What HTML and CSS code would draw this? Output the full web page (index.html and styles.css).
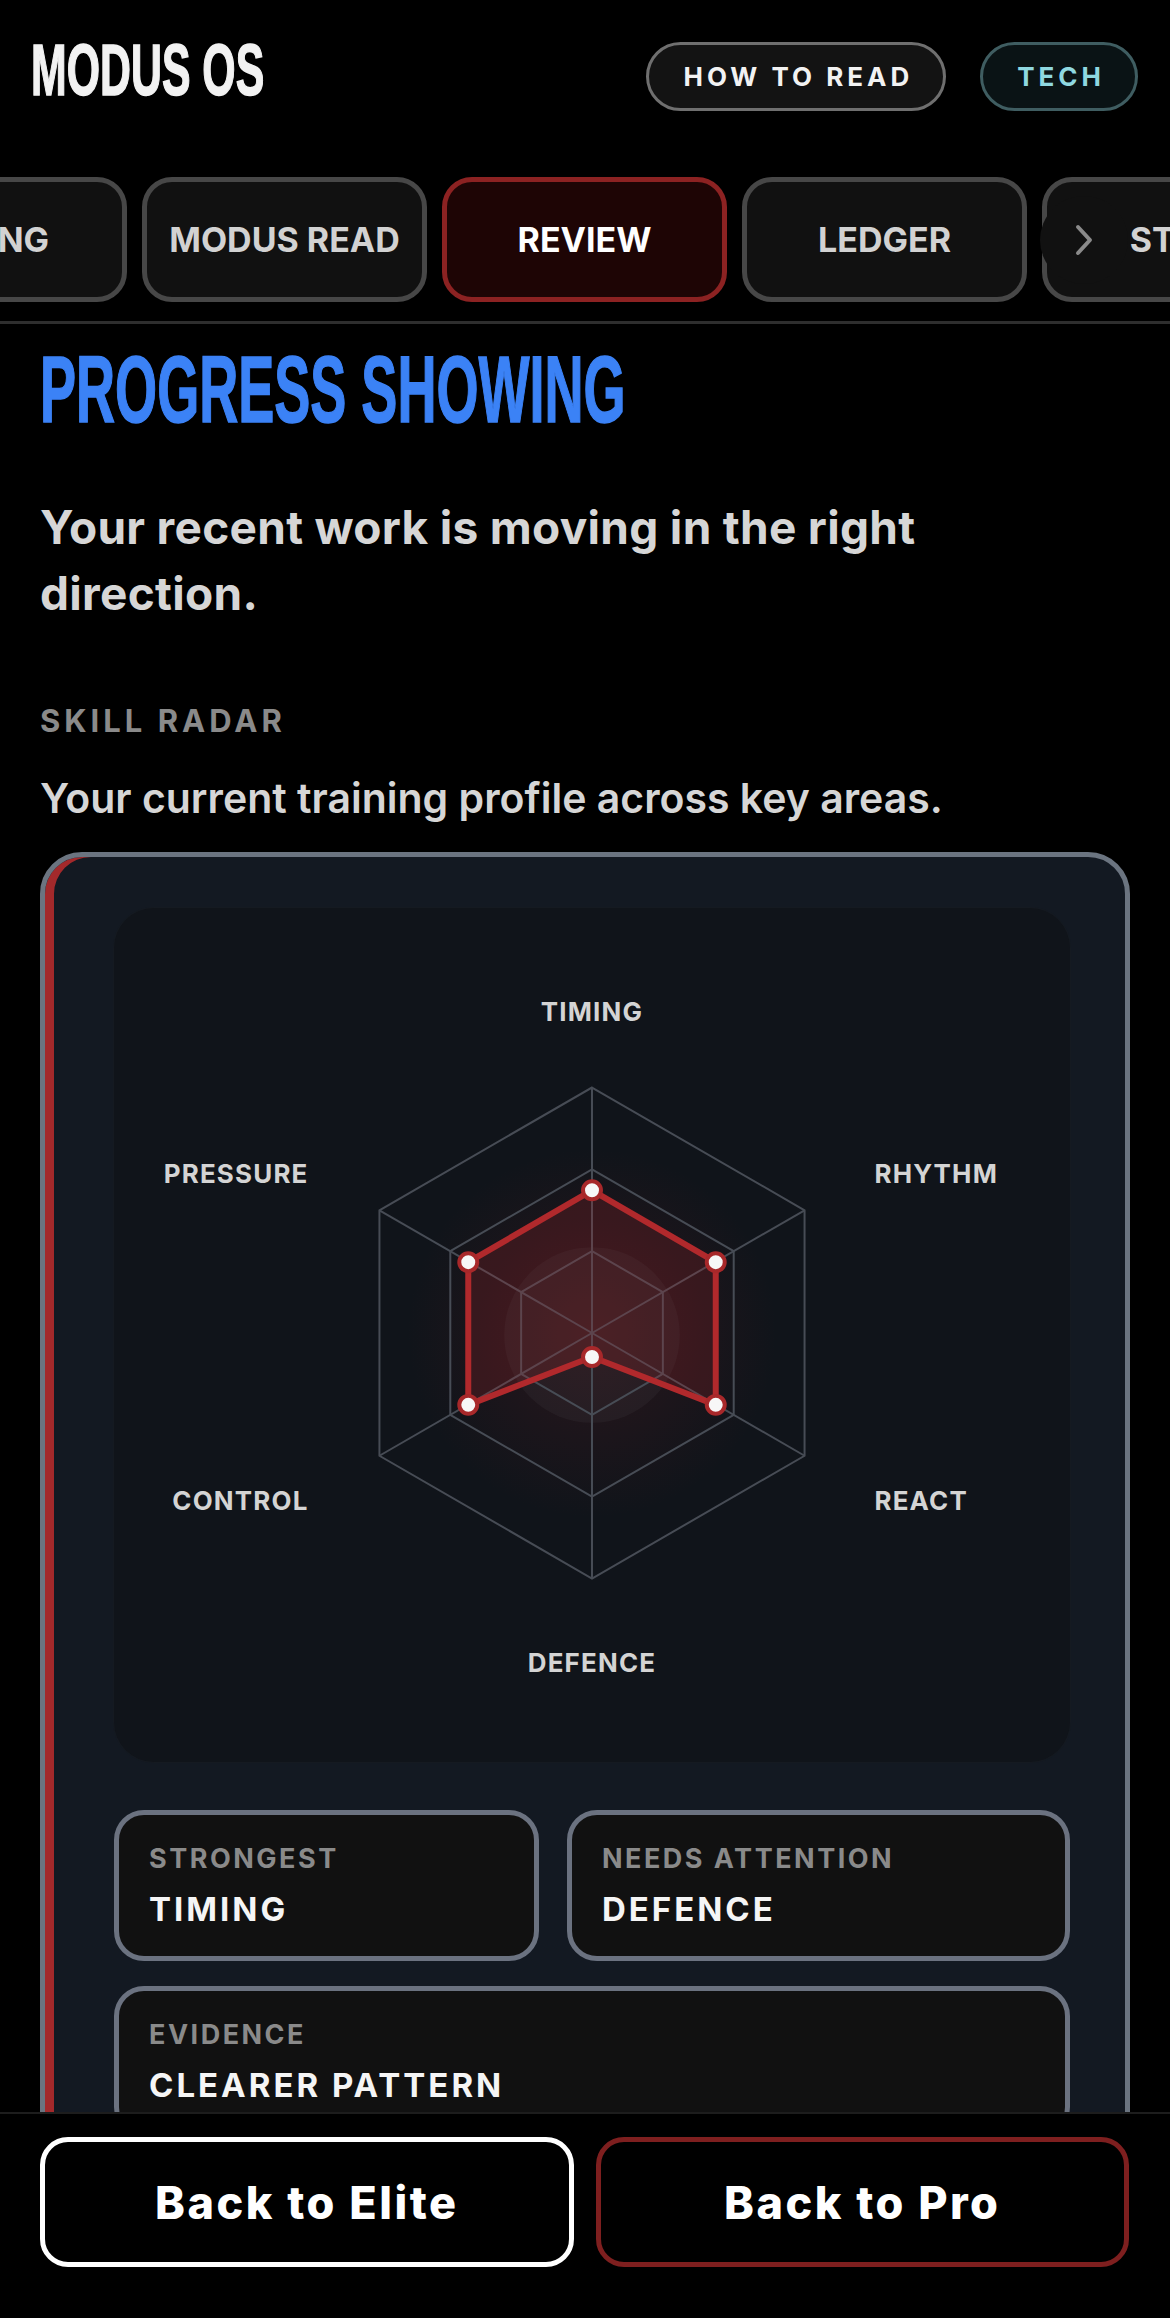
FILE: index.html
```html
<!DOCTYPE html>
<html lang="en">
<head>
    <meta charset="UTF-8">
    <meta name="viewport" content="width=device-width, initial-scale=1.0">
    <title>Modus OS - Review</title>
    <link rel="stylesheet" href="styles.css">
</head>
<body>

    <header class="topbar">
        <div class="brand">MODUS OS</div>
        <div class="top-actions">
            <button class="pill">HOW TO READ</button>
            <button class="pill pill-tech">TECH</button>
        </div>
    </header>

    <nav class="tabs-wrap">
        <div class="tabs" id="tabs">
            <a class="tab">PACING</a>
            <a class="tab">MODUS READ</a>
            <a class="tab active">REVIEW</a>
            <a class="tab">LEDGER</a>
            <a class="tab">STATS</a>
        </div>
        <div class="tabs-more">
            <svg width="22" height="34" viewBox="0 0 22 34"><path d="M5 4 L17 17 L5 30" fill="none" stroke="#8a8a8a" stroke-width="4" stroke-linecap="round" stroke-linejoin="round"/></svg>
        </div>
    </nav>
    <div class="divider"></div>

    <main class="content">
        <h1 class="headline">PROGRESS SHOWING</h1>
        <p class="lead">Your recent work is moving in the right direction.</p>

        <h3 class="eyebrow">SKILL RADAR</h3>
        <p class="sub">Your current training profile across key areas.</p>

        <section class="card">
            <div class="radar-panel">
                <svg class="radar" viewBox="0 0 958 854" width="958" height="854">
                    <defs>
                        <radialGradient id="glow">
                            <stop offset="0" stop-color="#8a1f24" stop-opacity="0.22"/>
                            <stop offset="1" stop-color="#8a1f24" stop-opacity="0"/>
                        </radialGradient>
                    </defs>
                    <circle cx="479" cy="425" r="185" fill="url(#glow)"/>
                    <circle cx="479" cy="427" r="88" fill="#ffffff" fill-opacity="0.035"/>

                    <g class="grid">
                        <polygon points="479,179 692,302 692,548 479,671 266,548 266,302"/>
                        <polygon points="479,261 621,343 621,507 479,589 337,507 337,343"/>
                        <polygon points="479,343 550,384 550,466 479,507 408,466 408,384"/>
                        <line x1="479" y1="425" x2="479" y2="179"/>
                        <line x1="479" y1="425" x2="692" y2="302"/>
                        <line x1="479" y1="425" x2="692" y2="548"/>
                        <line x1="479" y1="425" x2="479" y2="671"/>
                        <line x1="479" y1="425" x2="266" y2="548"/>
                        <line x1="479" y1="425" x2="266" y2="302"/>
                    </g>

                    <polygon class="shape" points="479,282 603,354 603,497 479,449 355,497 355,354"/>
                    <g class="dots">
                        <circle cx="479" cy="282" r="9"/>
                        <circle cx="603" cy="354" r="9"/>
                        <circle cx="603" cy="497" r="9"/>
                        <circle cx="479" cy="449" r="9"/>
                        <circle cx="355" cy="497" r="9"/>
                        <circle cx="355" cy="354" r="9"/>
                    </g>

                    <text class="axis" x="479" y="112" text-anchor="middle">TIMING</text>
                    <text class="axis" x="762" y="275" text-anchor="start">RHYTHM</text>
                    <text class="axis" x="762" y="602" text-anchor="start">REACT</text>
                    <text class="axis" x="479" y="765" text-anchor="middle">DEFENCE</text>
                    <text class="axis" x="195" y="602" text-anchor="end">CONTROL</text>
                    <text class="axis" x="195" y="275" text-anchor="end">PRESSURE</text>
                </svg>
            </div>

            <div class="stats">
                <div class="stat">
                    <div class="stat-label">STRONGEST</div>
                    <div class="stat-value">TIMING</div>
                </div>
                <div class="stat">
                    <div class="stat-label">NEEDS ATTENTION</div>
                    <div class="stat-value">DEFENCE</div>
                </div>
                <div class="stat wide">
                    <div class="stat-label">EVIDENCE</div>
                    <div class="stat-value">CLEARER PATTERN</div>
                </div>
            </div>
        </section>
    </main>

    <footer class="bottom-bar">
        <button class="btn">Back to Elite</button>
        <button class="btn btn-pro">Back to Pro</button>
    </footer>

    <script>
        document.getElementById('tabs').scrollLeft = 190;
    </script>

</body>
</html>
```

FILE: styles.css
```css
body {
    margin: 0;
    background-color: #000;
    color: #d6d6d6;
    font-family: Inter, "Noto Sans", sans-serif;
}

button {
    font-family: inherit;
    cursor: pointer;
}

/* header */

.topbar {
    display: flex;
    justify-content: space-between;
    align-items: flex-start;
    padding: 34px 32px 0 31px;
}

.brand {
    font-family: "Liberation Sans", Arial, sans-serif;
    font-weight: 700;
    font-size: 72px;
    line-height: 72px;
    color: #f2f2f2;
    -webkit-text-stroke: 1.5px #f2f2f2;
    transform: scaleX(0.595);
    transform-origin: left center;
    white-space: nowrap;
}

.top-actions {
    display: flex;
    gap: 34px;
    margin-top: 8px;
}

.pill {
    height: 69px;
    box-sizing: border-box;
    padding: 0 30px 0 34px;
    border: 3px solid #6f6f6f;
    border-radius: 999px;
    background-color: #131313;
    color: #f2f2f2;
    font-size: 26px;
    font-weight: 700;
    letter-spacing: 4px;
}

.pill-tech {
    border-color: #3f5d61;
    background-color: #0a1315;
    color: #8fd8e0;
}

/* tabs */

.tabs-wrap {
    position: relative;
    margin-top: 66px;
}

.tabs {
    display: flex;
    gap: 15px;
    padding: 0 32px;
    overflow-x: auto;
    scrollbar-width: none;
}

.tab {
    flex: 0 0 285px;
    height: 125px;
    box-sizing: border-box;
    border: 5px solid #474747;
    border-radius: 30px;
    background-color: #111;
    color: #d2d2d2;
    font-size: 34px;
    font-weight: 700;
    display: flex;
    align-items: center;
    justify-content: center;
}

.tab.active {
    border-color: #8c2222;
    background-color: #1e0505;
    color: #fff;
}

.tabs-more {
    position: absolute;
    right: 42px;
    top: 19px;
    width: 88px;
    height: 88px;
    border-radius: 50%;
    background-color: #111;
    display: flex;
    align-items: center;
    justify-content: center;
}

.divider {
    height: 3px;
    margin-top: 19px;
    background-color: #2e2e2e;
}

/* content */

.content {
    padding: 0 40px;
}

.headline {
    margin: 19px 0 0;
    font-family: "Liberation Sans", Arial, sans-serif;
    font-weight: 700;
    font-size: 94px;
    line-height: 94px;
    color: #3b82f6;
    -webkit-text-stroke: 1.5px #3b82f6;
    transform: scaleX(0.575);
    transform-origin: left center;
    white-space: nowrap;
}

.lead {
    max-width: 1000px;
    margin: 57px 0 0;
    font-size: 46px;
    line-height: 66px;
    font-weight: 700;
    letter-spacing: 0.3px;
}

.eyebrow {
    margin: 75px 0 0;
    font-size: 31px;
    line-height: 40px;
    font-weight: 700;
    letter-spacing: 4px;
    color: #8a8a8a;
}

.sub {
    margin: 33px 0 0;
    font-size: 41px;
    line-height: 48px;
    font-weight: 600;
}

.card {
    margin-top: 30px;
    border: 5px solid #6b7480;
    border-radius: 42px;
    background-color: #131922;
    box-shadow: inset 9px 0 0 #a3292b;
    padding: 51px 55px 40px 69px;
}

.radar-panel {
    background-color: #10141a;
    border-radius: 40px;
    box-shadow: 0 0 0 1px #151a21;
}

.radar {
    display: block;
    width: 100%;
    height: 854px;
}

.grid polygon,
.grid line {
    fill: none;
    stroke: #474c55;
    stroke-width: 2;
}

.shape {
    fill: #b3262c;
    fill-opacity: 0.2;
    stroke: #b1292c;
    stroke-width: 6;
    stroke-linejoin: round;
}

.dots circle {
    fill: #f7f7f7;
    stroke: #a8282a;
    stroke-width: 4;
}

.axis {
    font-family: Inter, "Noto Sans", sans-serif;
    font-size: 26px;
    font-weight: 700;
    letter-spacing: 1.2px;
    fill: #d4d4d4;
}

.stats {
    display: grid;
    grid-template-columns: 424fr 502fr;
    gap: 25px 28px;
    margin-top: 48px;
}

.stat {
    border: 5px solid #6b7280;
    border-radius: 30px;
    background-color: #111;
    padding: 27px 30px;
}

.stat.wide {
    grid-column: 1 / -1;
}

.stat-label {
    font-size: 27px;
    line-height: 34px;
    font-weight: 700;
    letter-spacing: 2.5px;
    color: #8a8a8a;
}

.stat-value {
    margin-top: 13px;
    font-size: 33px;
    line-height: 40px;
    font-weight: 700;
    letter-spacing: 3px;
    color: #f5f5f5;
}

/* bottom actions */

.bottom-bar {
    position: fixed;
    left: 0;
    right: 0;
    bottom: 0;
    display: grid;
    grid-template-columns: 1fr 1fr;
    gap: 22px;
    padding: 23px 41px 51px 40px;
    background-color: #000;
    border-top: 2px solid #1d1d1d;
}

.btn {
    height: 130px;
    border: 5px solid #fff;
    border-radius: 28px;
    background-color: #000;
    color: #fff;
    font-size: 45px;
    font-weight: 800;
    letter-spacing: 2.5px;
}

.btn-pro {
    border-color: #7e1f1f;
}
```
